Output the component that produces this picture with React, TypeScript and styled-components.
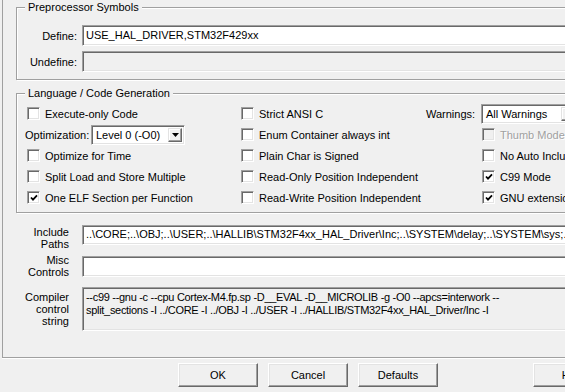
import styled, { createGlobalStyle } from "styled-components";

const GlobalStyle = createGlobalStyle`
  html, body {
    margin: 0;
    padding: 0;
    background: #f0f0f0;
    overflow: hidden;
  }
  body {
    width: 565px;
    height: 392px;
    font-family: "Liberation Sans", Arial, sans-serif;
    font-size: 11px;
    color: #000;
  }
`;

const Dialog = styled.div`
  width: 565px;
  height: 392px;
  overflow: hidden;
`;

const TabPage = styled.div`
  box-sizing: border-box;
  width: 640px;
  height: 358px;
  margin-left: 2px;
  padding: 1px 0 0 13px;
  border-left: 1px solid #a0a0a0;
  border-bottom: 1px solid #a0a0a0;
  box-shadow: 0 1px 0 #fff;
`;

const GroupBox = styled.fieldset<{ $gap?: number }>`
  margin: ${(p) => p.$gap ?? 0}px 0 0 0;
  padding: 0;
  min-width: 0;
  border: 1px solid #a0a0a0;
  box-shadow: inset 1px 1px 0 #fff, 1px 1px 0 #fff;
`;

const GroupTitle = styled.legend`
  margin-left: 8px;
  padding: 0 3px;
  line-height: 13px;
  background: #f0f0f0;
`;

const SymbolGrid = styled.div`
  display: grid;
  grid-template-columns: 60px 1fr;
  grid-auto-rows: 21px;
  column-gap: 5px;
  row-gap: 5px;
  align-items: center;
  padding: 11px 0 7px 0;
`;

const FieldLabel = styled.div<{ $offset?: number }>`
  text-align: right;
  line-height: 12px;
  margin-top: ${(p) => p.$offset ?? 0}px;
`;

const TextField = styled.div<{ $disabled?: boolean; $h?: number }>`
  box-sizing: border-box;
  height: ${(p) => p.$h ?? 21}px;
  padding: 0 3px;
  line-height: ${(p) => (p.$h ?? 21) - 3}px;
  white-space: nowrap;
  overflow: hidden;
  background: ${(p) => (p.$disabled ? "#f0f0f0" : "#fff")};
  border: 1px solid;
  border-color: #a0a0a0 #fff #fff #a0a0a0;
  box-shadow: inset 1px 1px 0 #696969, inset -1px -1px 0 #e3e3e3;
`;

const OptionGrid = styled.div`
  display: grid;
  grid-template-columns: 214px 185px 1fr;
  grid-auto-rows: 21px;
  align-items: center;
  padding: 3px 0 4px 10px;
`;

const CheckRow = styled.label<{ $disabled?: boolean; $indent?: number }>`
  display: flex;
  align-items: center;
  gap: 5px;
  margin-left: ${(p) => p.$indent ?? 0}px;
  white-space: nowrap;
  color: ${(p) => (p.$disabled ? "#a0a0a0" : "#000")};
  text-shadow: ${(p) => (p.$disabled ? "1px 1px 0 #fff" : "none")};
`;

const Box = styled.span<{ $disabled?: boolean }>`
  box-sizing: border-box;
  flex: none;
  width: 13px;
  height: 13px;
  display: flex;
  align-items: center;
  justify-content: center;
  background: ${(p) => (p.$disabled ? "#f0f0f0" : "#fff")};
  border: 1px solid;
  border-color: #a0a0a0 #fff #fff #a0a0a0;
  box-shadow: inset 1px 1px 0 #696969, inset -1px -1px 0 #e3e3e3;
`;

const ComboRow = styled.div<{ $shift?: number }>`
  display: flex;
  align-items: center;
  margin-left: ${(p) => p.$shift ?? 0}px;
  white-space: nowrap;
`;

const ComboLabel = styled.span<{ $w: number }>`
  width: ${(p) => p.$w}px;
  flex: none;
`;

const Combo = styled.div<{ $w: number }>`
  box-sizing: border-box;
  width: ${(p) => p.$w}px;
  height: 20px;
  flex: none;
  display: flex;
  align-items: center;
  background: #fff;
  border: 1px solid;
  border-color: #a0a0a0 #fff #fff #a0a0a0;
  box-shadow: inset 1px 1px 0 #696969, inset -1px -1px 0 #e3e3e3;
  padding: 2px;
`;

const ComboText = styled.span`
  flex: 1;
  padding-left: 2px;
  overflow: hidden;
`;

const DropButton = styled.span`
  box-sizing: border-box;
  width: 14px;
  height: 14px;
  flex: none;
  display: flex;
  align-items: center;
  justify-content: center;
  background: #f0f0f0;
  border: 1px solid;
  border-color: #e3e3e3 #696969 #696969 #e3e3e3;
  box-shadow: inset -1px -1px 0 #a0a0a0, inset 1px 1px 0 #fff;
`;

const FieldGrid = styled.div`
  display: grid;
  grid-template-columns: 53px 1fr;
  grid-template-rows: 31px 31px 44px;
  column-gap: 13px;
  align-items: start;
  margin-top: 12px;
`;

const CommandText = styled.div`
  box-sizing: border-box;
  height: 44px;
  padding: 3px 3px 0 3px;
  line-height: 13px;
  letter-spacing: -0.3px;
  white-space: pre;
  overflow: hidden;
  background: #f0f0f0;
  border: 1px solid;
  border-color: #a0a0a0 #fff #fff #a0a0a0;
  box-shadow: inset 1px 1px 0 #696969, inset -1px -1px 0 #e3e3e3;
`;

const ButtonBar = styled.div`
  box-sizing: border-box;
  width: 660px;
  display: grid;
  grid-template-columns: 80px 80px 80px 75px 80px;
  column-gap: 10px;
  padding: 5px 0 0 178px;
`;

const PushButton = styled.button<{ $col?: number }>`
  box-sizing: border-box;
  grid-column: ${(p) => p.$col ?? "auto"};
  width: 80px;
  height: 24px;
  margin: 0;
  padding: 0;
  font: inherit;
  text-align: center;
  color: #000;
  background: #f0f0f0;
  border: 1px solid;
  border-color: #fff #696969 #696969 #fff;
  box-shadow: inset -1px -1px 0 #a0a0a0, inset 1px 1px 0 #e3e3e3;
`;

const Check = ({
  label,
  checked,
  disabled,
  indent,
}: {
  label: string;
  checked?: boolean;
  disabled?: boolean;
  indent?: number;
}) => (
  <CheckRow $disabled={disabled} $indent={indent}>
    <Box $disabled={disabled}>
      {checked ? (
        <svg width="8" height="8" viewBox="0 0 8 8">
          <polyline points="1,3.5 3,5.6 7,1.4" fill="none" stroke="#000" strokeWidth="1.8" />
        </svg>
      ) : null}
    </Box>
    {label}
  </CheckRow>
);

const Arrow = () => (
  <svg width="7" height="4" viewBox="0 0 7 4">
    <polygon points="0,0 7,0 3.5,4" fill="#000" />
  </svg>
);

const includePaths =
  "..\\CORE;..\\OBJ;..\\USER;..\\HALLIB\\STM32F4xx_HAL_Driver\\Inc;..\\SYSTEM\\delay;..\\SYSTEM\\sys;..\\SYSTEM\\usart";

const controlString =
  "--c99 --gnu -c --cpu Cortex-M4.fp.sp -D__EVAL -D__MICROLIB -g -O0 --apcs=interwork --\nsplit_sections -I ../CORE -I ../OBJ -I ../USER -I ../HALLIB/STM32F4xx_HAL_Driver/Inc -I";

const App: React.FC = () => {
  return (
    <Dialog>
      <GlobalStyle />
      <TabPage>
        <GroupBox>
          <GroupTitle>Preprocessor Symbols</GroupTitle>
          <SymbolGrid>
            <FieldLabel>Define:</FieldLabel>
            <TextField>USE_HAL_DRIVER,STM32F429xx</TextField>
            <FieldLabel>Undefine:</FieldLabel>
            <TextField $disabled />
          </SymbolGrid>
        </GroupBox>

        <GroupBox $gap={7}>
          <GroupTitle>Language / Code Generation</GroupTitle>
          <OptionGrid>
            <Check label="Execute-only Code" />
            <Check label="Strict ANSI C" />
            <ComboRow>
              <ComboLabel $w={55}>Warnings:</ComboLabel>
              <Combo $w={97}>
                <ComboText>All Warnings</ComboText>
                <DropButton>
                  <Arrow />
                </DropButton>
              </Combo>
            </ComboRow>

            <ComboRow $shift={-2}>
              <ComboLabel $w={66}>Optimization:</ComboLabel>
              <Combo $w={94}>
                <ComboText>Level 0 (-O0)</ComboText>
                <DropButton>
                  <Arrow />
                </DropButton>
              </Combo>
            </ComboRow>
            <Check label="Enum Container always int" />
            <Check label="Thumb Mode" disabled indent={56} />

            <Check label="Optimize for Time" />
            <Check label="Plain Char is Signed" />
            <Check label="No Auto Includes" indent={56} />

            <Check label="Split Load and Store Multiple" />
            <Check label="Read-Only Position Independent" />
            <Check label="C99 Mode" checked indent={56} />

            <Check label="One ELF Section per Function" checked />
            <Check label="Read-Write Position Independent" />
            <Check label="GNU extensions" checked indent={56} />
          </OptionGrid>
        </GroupBox>

        <FieldGrid>
          <FieldLabel $offset={1}>
            Include
            <br />
            Paths
          </FieldLabel>
          <TextField $h={20}>{includePaths}</TextField>
          <FieldLabel $offset={-2}>
            Misc
            <br />
            Controls
          </FieldLabel>
          <TextField />
          <FieldLabel $offset={4}>
            Compiler
            <br />
            control
            <br />
            string
          </FieldLabel>
          <CommandText>{controlString}</CommandText>
        </FieldGrid>
      </TabPage>

      <ButtonBar>
        <PushButton>OK</PushButton>
        <PushButton>Cancel</PushButton>
        <PushButton>Defaults</PushButton>
        <PushButton $col={5}>Help</PushButton>
      </ButtonBar>
    </Dialog>
  );
};

export default App;
